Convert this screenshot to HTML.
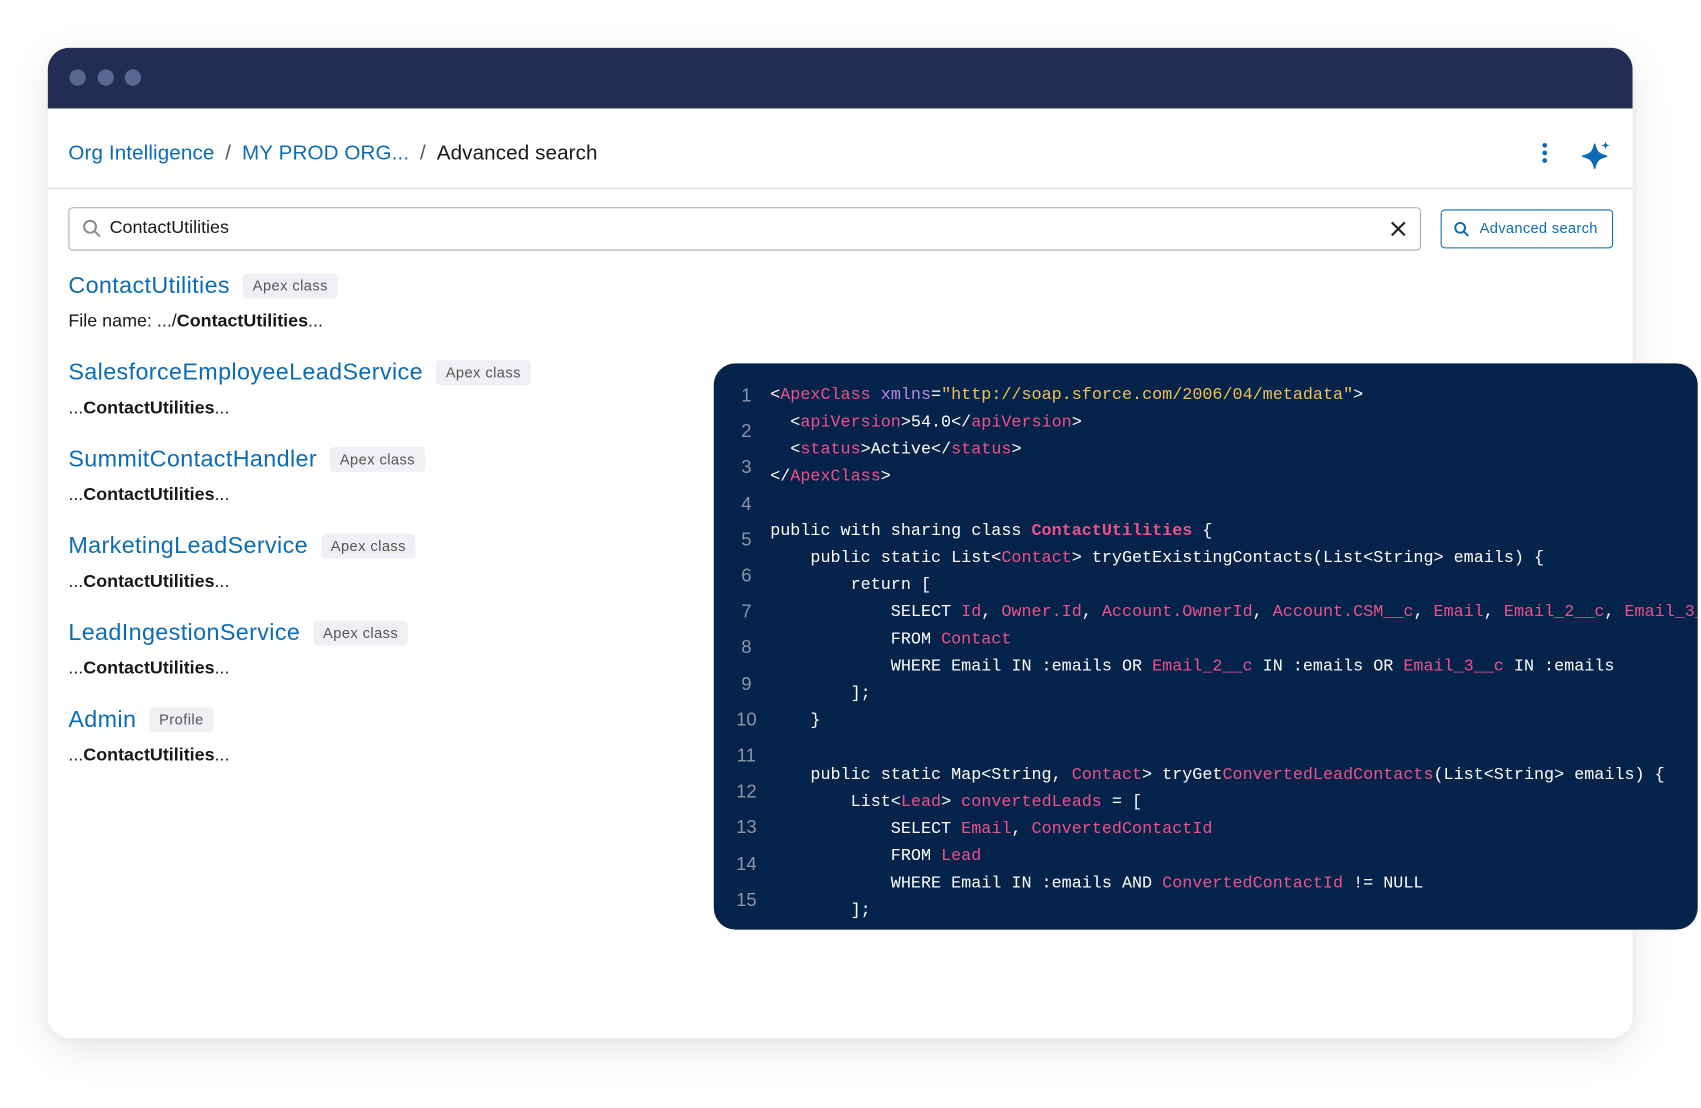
<!DOCTYPE html>
<html><head><meta charset="utf-8"><style>
*{box-sizing:border-box;margin:0;padding:0}
html,body{width:1701px;height:1108px;overflow:hidden;background:#fff}
#s{position:absolute;left:0;top:0;width:1568px;height:1021px;transform:scale(1.0848);transform-origin:0 0;font-family:"Liberation Sans",Arial,sans-serif}
.win{position:absolute;left:44px;top:44px;width:1461px;height:913px;border-radius:20px;background:#fff;box-shadow:0 10px 40px rgba(0,0,0,.10),0 2px 8px rgba(0,0,0,.05);overflow:hidden}
.bar{height:56px;background:#212d52;position:relative}
.dot{position:absolute;top:20px;width:15px;height:15px;border-radius:50%;background:#5a6891}
.bc{position:absolute;left:19px;top:87px;font-size:19px;color:#181818;white-space:nowrap;letter-spacing:.1px}
.bc a{color:#0b6cb5;text-decoration:none}
.bc .sep{color:#555;margin:0 10px}
.hr{position:absolute;left:0;right:0;top:129px;height:1px;background:#dcdfe4}
.inp{position:absolute;left:19px;top:147px;width:1247px;height:40px;border:1px solid #a9aeb6;border-radius:4px}
.inp span{position:absolute;left:37px;top:9px;font-size:16.5px;color:#181818}
.btn{position:absolute;left:1284px;top:149px;width:159px;height:36px;border:1px solid #0b6cb5;border-radius:4px;color:#0b6cb5;font-size:13.5px;letter-spacing:.3px}
.btn span{position:absolute;left:35px;top:9px}
.res{position:absolute;left:19px;white-space:nowrap}
.res .t{font-size:21.5px;color:#0b6cb5;display:inline-block;vertical-align:middle;letter-spacing:.35px}
.res .tag{display:inline-block;vertical-align:middle;margin-left:12px;background:#eef0f3;color:#555;font-size:13.5px;letter-spacing:.4px;padding:4px 9px;border-radius:4px}
.res .d{font-size:16.5px;color:#181818;margin-top:11px}
.code{position:absolute;left:658px;top:335px;width:907px;height:522px;background:#03234a;border-radius:20px;overflow:hidden}
.ln{position:absolute;left:0;top:13px;width:60px;text-align:center;color:#8c96a8;font-size:17px;line-height:33.2px;font-family:"Liberation Sans",sans-serif}
pre{position:absolute;left:52px;top:17px;font-family:"Liberation Mono",monospace;font-size:15.45px;line-height:25px;color:#fff;white-space:pre}
.p{color:#f0508a}.y{color:#f2c14e}.v{color:#b98ae8}.b{color:#f0508a;font-weight:bold}
</style></head><body><div id="s">
<div class="win">
 <div class="bar"><div class="dot" style="left:20px"></div><div class="dot" style="left:46px"></div><div class="dot" style="left:71px"></div></div>
 <div class="bc"><a>Org Intelligence</a><span class="sep">/</span><a>MY PROD ORG...</a><span class="sep">/</span>Advanced search</div>
 <svg style="position:absolute;left:1375px;top:87px" width="10" height="22" viewBox="0 0 10 22"><circle cx="5" cy="3" r="2.2" fill="#0b6cb5"/><circle cx="5" cy="10" r="2.2" fill="#0b6cb5"/><circle cx="5" cy="17" r="2.2" fill="#0b6cb5"/></svg>
 <svg style="position:absolute;left:1413px;top:84px" width="30" height="30" viewBox="0 0 30 30"><path d="M13 5 C14.5 12 16.5 14 24 16 C16.5 18 14.5 20 13 27 C11.5 20 9.5 18 2 16 C9.5 14 11.5 12 13 5Z" fill="#0b6cb5" stroke="#0b6cb5" stroke-width="1.5" stroke-linejoin="round"/><path d="M23 2 C23.5 5 24 5.5 27 6 C24 6.5 23.5 7 23 10 C22.5 7 22 6.5 19 6 C22 5.5 22.5 5 23 2Z" fill="#0b6cb5"/></svg>
 <div class="hr"></div>
 <div class="inp"><svg style="position:absolute;left:12px;top:10px" width="18" height="18" viewBox="0 0 18 18"><circle cx="7" cy="7" r="5.5" fill="none" stroke="#888" stroke-width="1.8"/><path d="M11 11 L16 16" stroke="#888" stroke-width="1.8"/></svg><span>ContactUtilities</span>
 <svg style="position:absolute;left:1217px;top:11px" width="16" height="16" viewBox="0 0 16 16"><path d="M2 2 L14 14 M14 2 L2 14" stroke="#222" stroke-width="2"/></svg></div>
 <div class="btn"><svg style="position:absolute;left:11px;top:10px" width="15" height="15" viewBox="0 0 15 15"><circle cx="6" cy="6" r="4.5" fill="none" stroke="#0b6cb5" stroke-width="1.8"/><path d="M9.3 9.3 L13.5 13.5" stroke="#0b6cb5" stroke-width="1.8"/></svg><span>Advanced search</span></div>
 <div class="res" style="top:207px"><span class="t">ContactUtilities</span><span class="tag">Apex class</span><div class="d">File name: .../<b>ContactUtilities</b>...</div></div>
 <div class="res" style="top:287px"><span class="t">SalesforceEmployeeLeadService</span><span class="tag">Apex class</span><div class="d">...<b>ContactUtilities</b>...</div></div>
 <div class="res" style="top:367px"><span class="t">SummitContactHandler</span><span class="tag">Apex class</span><div class="d">...<b>ContactUtilities</b>...</div></div>
 <div class="res" style="top:447px"><span class="t">MarketingLeadService</span><span class="tag">Apex class</span><div class="d">...<b>ContactUtilities</b>...</div></div>
 <div class="res" style="top:527px"><span class="t">LeadIngestionService</span><span class="tag">Apex class</span><div class="d">...<b>ContactUtilities</b>...</div></div>
 <div class="res" style="top:607px"><span class="t">Admin</span><span class="tag">Profile</span><div class="d">...<b>ContactUtilities</b>...</div></div>
</div>
<div class="code">
<div class="ln">1<br>2<br>3<br>4<br>5<br>6<br>7<br>8<br>9<br>10<br>11<br>12<br>13<br>14<br>15</div>
<pre>&lt;<span class="p">ApexClass</span> <span class="v">xmlns</span>=<span class="y">"http://soap.sforce.com/2006/04/metadata"</span>&gt;
  &lt;<span class="p">apiVersion</span>&gt;54.0&lt;/<span class="p">apiVersion</span>&gt;
  &lt;<span class="p">status</span>&gt;Active&lt;/<span class="p">status</span>&gt;
&lt;/<span class="p">ApexClass</span>&gt;

public with sharing class <span class="b">ContactUtilities</span> {
    public static List&lt;<span class="p">Contact</span>&gt; tryGetExistingContacts(List&lt;String&gt; emails) {
        return [
            SELECT <span class="p">Id</span>, <span class="p">Owner.Id</span>, <span class="p">Account.OwnerId</span>, <span class="p">Account.CSM__c</span>, <span class="p">Email</span>, <span class="p">Email_2__c</span>, <span class="p">Email_3__c</span>
            FROM <span class="p">Contact</span>
            WHERE Email IN :emails OR <span class="p">Email_2__c</span> IN :emails OR <span class="p">Email_3__c</span> IN :emails
        ];
    }

    public static Map&lt;String, <span class="p">Contact</span>&gt; tryGet<span class="p">ConvertedLeadContacts</span>(List&lt;String&gt; emails) {
        List&lt;<span class="p">Lead</span>&gt; <span class="p">convertedLeads</span> = [
            SELECT <span class="p">Email</span>, <span class="p">ConvertedContactId</span>
            FROM <span class="p">Lead</span>
            WHERE Email IN :emails AND <span class="p">ConvertedContactId</span> != NULL
        ];</pre>
</div>
</div></body></html>
